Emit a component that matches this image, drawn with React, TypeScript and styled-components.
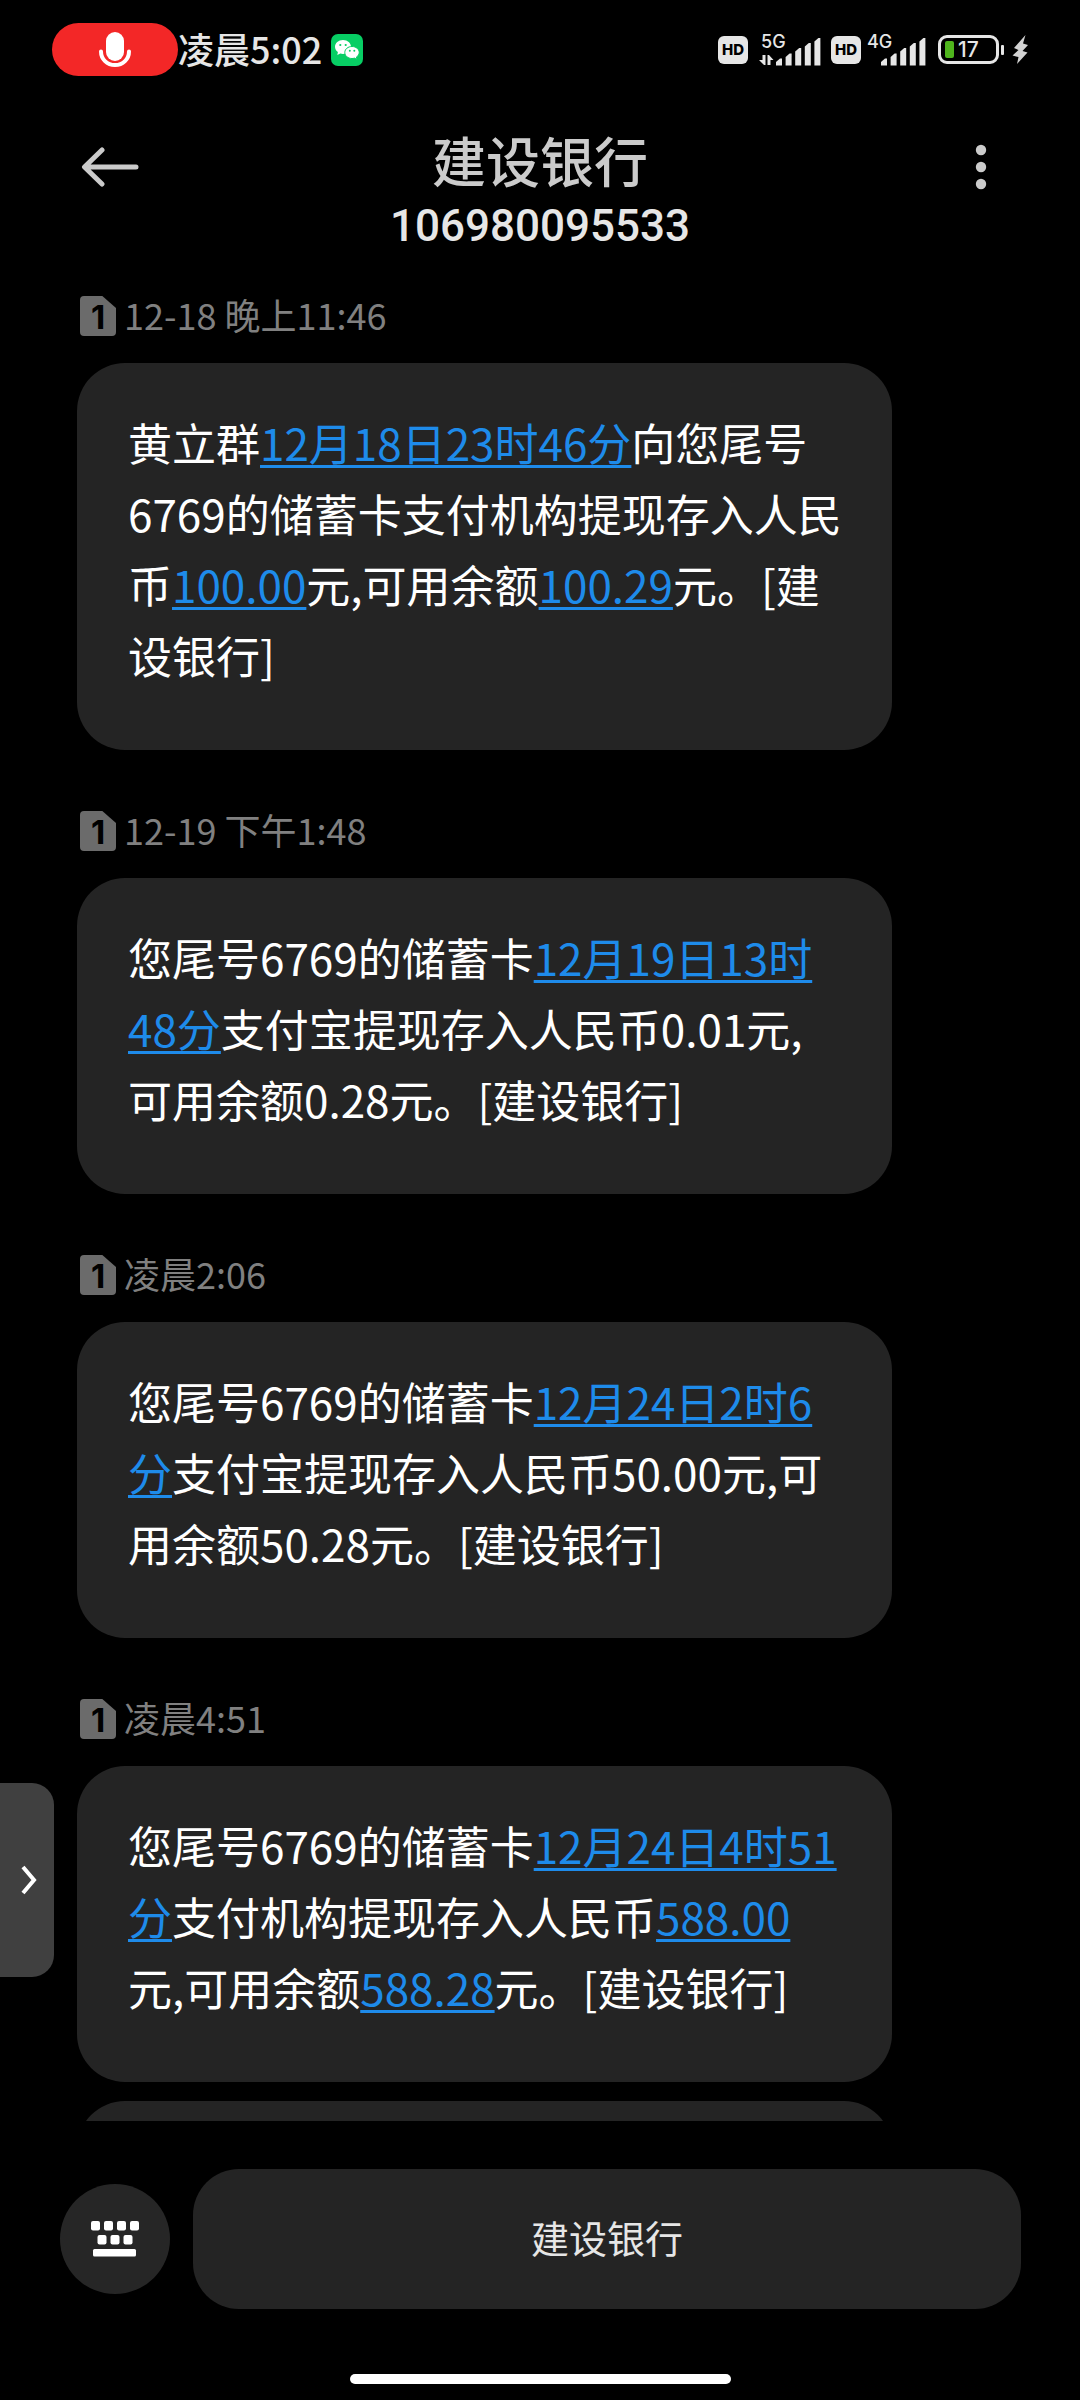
import React from "react";
import styled, { createGlobalStyle } from "styled-components";

const cjk = `"Noto Sans CJK SC", "Noto Sans", sans-serif`;

const GlobalStyle = createGlobalStyle`
  * { box-sizing: border-box; }
  body { margin: 0; background: #000; font-family: ${cjk}; }
  button { border: 0; padding: 0; background: none; color: inherit; font: inherit; cursor: pointer; }
`;

const Screen = styled.div`
  position: relative;
  display: flex;
  flex-direction: column;
  height: 100vh;
  overflow: hidden;
  background: #000;
  color: #fff;
`;

const StatusBar = styled.div`
  display: flex;
  flex: none;
  align-items: center;
  justify-content: space-between;
  height: 99px;
  padding: 0 52px;
  color: #e6e6e6;
`;

const StatusGroup = styled.div<{ $gap?: number }>`
  display: flex;
  align-items: center;
  gap: ${(p) => p.$gap ?? 0}px;
`;

const RecordingPill = styled.div`
  display: grid;
  place-items: center;
  width: 126px;
  height: 53px;
  border-radius: 27px;
  background: #f32727;
`;

const Clock = styled.time`
  margin-right: 9px;
  padding-bottom: 4px;
  font-size: 36px;
  font-weight: 500;
  line-height: 48px;
`;

const HdBadge = styled.span`
  display: grid;
  place-items: center;
  width: 30px;
  height: 28px;
  border-radius: 6px;
  background: #e6e6e6;
  color: #000;
  font: 800 15px/28px Inter, sans-serif;
`;

const Signal = styled.span<{ $wide?: boolean }>`
  display: grid;
  grid-template-areas: "cell";
  width: ${(p) => (p.$wide ? 62 : 58)}px;
  height: 32px;
  & > * { grid-area: cell; }
`;

const Network = styled.span<{ $wide?: boolean }>`
  padding-left: ${(p) => (p.$wide ? 2 : 0)}px;
  font: 500 18px/16px Inter, sans-serif;
`;

const Battery = styled.span`
  display: flex;
  align-items: center;
  gap: 4px;
  width: 61px;
  height: 29px;
  padding-left: 4px;
  border: 3px solid #e6e6e6;
  border-radius: 9px;
  font: 500 21px/23px Inter, sans-serif;
`;

const Charge = styled.span`
  width: 9px;
  height: 17px;
  border-radius: 2px;
  background: #4fb51d;
`;

const BatteryCap = styled.span`
  width: 3px;
  height: 10px;
  margin: 0 8px 0 2px;
  border-radius: 1px;
  background: #e6e6e6;
`;

const Header = styled.header`
  display: grid;
  flex: none;
  grid-template-columns: 80px 1fr 80px;
  padding: 28px 59px 0;
`;

const IconButton = styled.button<{ $start?: boolean }>`
  display: grid;
  align-items: center;
  justify-items: ${(p) => (p.$start ? "end" : "center")};
  width: 80px;
  height: 80px;
`;

const Titles = styled.div`
  text-align: center;
`;

const Title = styled.h1`
  margin: 0;
  color: #cbcbcb;
  font-size: 54px;
  font-weight: 500;
  line-height: 65px;
`;

const Sender = styled.p`
  margin: 0;
  color: #e6e6e6;
  font: 500 44px/68px Roboto, sans-serif;
`;

const Thread = styled.main`
  flex: 1;
  min-height: 0;
  overflow: hidden;
  padding: 36px 77px 0;
`;

const Message = styled.article`
  max-width: 815px;
  margin-bottom: 61px;
`;

const Stamp = styled.div`
  display: flex;
  gap: 8px;
  height: 40px;
  margin: 0 0 27px 3px;
  color: #808080;
  font-size: 36px;
  line-height: 36px;
`;

const Sim = styled.span`
  width: 36px;
  height: 40px;
  border-radius: 4px;
  background: #6b6b6b;
  clip-path: polygon(0 0, 62% 0, 100% 30%, 100% 100%, 0 100%);
  color: #000;
  font: 700 33px/42px Inter, sans-serif;
  text-align: center;
`;

const Bubble = styled.p`
  margin: 0;
  padding: 44px 46px 59px 51px;
  border-radius: 48px;
  background: #242424;
  font-size: 44px;
  line-height: 71px;
`;

const NextBubble = styled.div`
  max-width: 815px;
  height: 174px;
  margin-top: -42px;
  border-radius: 48px;
  background: #242424;
`;

const Link = styled.a`
  color: #1e8bea;
  text-decoration: underline;
  text-decoration-thickness: 3px;
  text-decoration-skip-ink: none;
  text-underline-offset: 4px;
`;

const Footer = styled.footer`
  display: flex;
  flex: none;
  align-items: center;
  gap: 23px;
  padding: 48px 59px 65px 60px;
`;

const KeyboardButton = styled.button`
  display: grid;
  flex: none;
  place-items: center;
  width: 110px;
  height: 110px;
  border-radius: 50%;
  background: #262626;
`;

const MenuButton = styled.button`
  flex: 1;
  height: 140px;
  padding-bottom: 5px;
  border-radius: 46px;
  background: #242424;
  color: #e6e6e6;
  font-size: 38px;
`;

const HomeBar = styled.div`
  flex: none;
  align-self: center;
  width: 381px;
  height: 10px;
  margin-bottom: 16px;
  border-radius: 5px;
  background: #fff;
`;

const SideHandle = styled.button`
  position: absolute;
  top: 1783px;
  left: 0;
  display: grid;
  place-items: center;
  width: 54px;
  height: 194px;
  padding-left: 4px;
  border-radius: 0 22px 22px 0;
  background: #404040;
`;

type Part = string | { link: string };

const messages: { time: string; lines: Part[][] }[] = [
  {
    time: "12-18 晚上11:46",
    lines: [
      ["黄立群", { link: "12月18日23时46分" }, "向您尾号"],
      ["6769的储蓄卡支付机构提现存入人民"],
      ["币", { link: "100.00" }, "元,可用余额", { link: "100.29" }, "元。[建"],
      ["设银行]"],
    ],
  },
  {
    time: "12-19 下午1:48",
    lines: [
      ["您尾号6769的储蓄卡", { link: "12月19日13时" }],
      [{ link: "48分" }, "支付宝提现存入人民币0.01元,"],
      ["可用余额0.28元。[建设银行]"],
    ],
  },
  {
    time: "凌晨2:06",
    lines: [
      ["您尾号6769的储蓄卡", { link: "12月24日2时6" }],
      [{ link: "分" }, "支付宝提现存入人民币50.00元,可"],
      ["用余额50.28元。[建设银行]"],
    ],
  },
  {
    time: "凌晨4:51",
    lines: [
      ["您尾号6769的储蓄卡", { link: "12月24日4时51" }],
      [{ link: "分" }, "支付机构提现存入人民币", { link: "588.00" }],
      ["元,可用余额", { link: "588.28" }, "元。[建设银行]"],
    ],
  },
];

const Mic = () => (
  <svg width="32" height="36" viewBox="0 0 32 36" fill="none">
    <rect x="7" y="0" width="18" height="29" rx="9" fill="#fff" />
    <path d="M2 19.500C2 27 8 33 16 33s14-6 14-13.500" stroke="#fff" strokeWidth="4" strokeLinecap="round" />
  </svg>
);

const WeChat = () => (
  <svg width="32" height="32" viewBox="0 0 32 32">
    <rect width="32" height="32" rx="7" fill="#07ce64" />
    <path d="M12 6C7.400 6 4 9 4 12.800c0 2.200 1.100 4 2.900 5.300L6.300 21l3-1.500c.9.200 1.800.4 2.700.4 4.600 0 8-3.200 8-7S16.600 6 12 6Z" fill="#fff" />
    <path d="M21 12.500c-4 0-7.200 2.600-7.200 6s3.200 6 7.200 6c.8 0 1.700-.1 2.400-.4l2.600 1.400-.6-2.400c1.700-1.100 2.800-2.700 2.800-4.600 0-3.400-3.200-6-7.200-6Z" fill="#fff" stroke="#07ce64" strokeWidth="1" />
    <g fill="#07ce64">
      <circle cx="9.300" cy="11" r="1.100" />
      <circle cx="14.700" cy="11" r="1.100" />
      <circle cx="18.800" cy="16.800" r="1" />
      <circle cx="23.300" cy="16.800" r="1" />
    </g>
  </svg>
);

const Bars = ({ offset, arrows }: { offset: number; arrows?: boolean }) => (
  <svg width={offset + 45} height="32" viewBox={`0 0 ${offset + 45} 32`} fill="#e6e6e6">
    {[24.500, 19.500, 14, 9, 4].map((top, i) => {
      const x = offset + i * 9.600;
      return <path key={top} d={`M${x} 31.500V${top + 3.500}L${x + 4} ${top}H${x + 6}V31.500Z`} />;
    })}
    {arrows && <path d="M3.500 21H6.500v10H5L0 26h3.500ZM8.500 21H10l4.500 5H11.500V31H8.500Z" />}
  </svg>
);

const Bolt = () => (
  <svg width="16" height="29" viewBox="0 0 16 29" fill="#d2d2d2">
    <path d="M13.500 0 2 13l4.500 2L.5 20.500l6 1.500L5 29 15.500 17.500 10.500 16l5.500-6-5-1.500Z" />
  </svg>
);

const BackArrow = () => (
  <svg width="58" height="40" viewBox="0 0 58 40" fill="none" stroke="#cbcbcb" strokeWidth="5" strokeLinecap="round" strokeLinejoin="round">
    <path d="M21 3 3.500 20 21 37M4 20h51" />
  </svg>
);

const Dots = () => (
  <svg width="12" height="46" viewBox="0 0 12 46" fill="#cbcbcb">
    <circle cx="6" cy="6" r="5.200" />
    <circle cx="6" cy="23" r="5.200" />
    <circle cx="6" cy="40" r="5.200" />
  </svg>
);

const Keyboard = () => (
  <svg width="48" height="36" viewBox="0 0 48 36" fill="#fff">
    {[0, 13, 26, 39].map((x) => <rect key={x} x={x} y="0" width="9" height="9.500" rx="2" />)}
    {[6.500, 19.500, 32.500].map((x) => <rect key={x} x={x} y="14" width="9" height="9.500" rx="2" />)}
    <rect x="2" y="28" width="43" height="7.500" rx="1.500" />
  </svg>
);

const Chevron = () => (
  <svg width="18" height="30" viewBox="0 0 18 30" fill="none" stroke="#fff" strokeWidth="4">
    <path d="M3 2l11 13L3 28" />
  </svg>
);

export default function App() {
  return (
    <Screen>
      <GlobalStyle />
      <StatusBar>
        <StatusGroup>
          <RecordingPill><Mic /></RecordingPill>
          <Clock>凌晨5:02</Clock>
          <WeChat />
        </StatusGroup>
        <StatusGroup $gap={13}>
          <StatusGroup $gap={10}>
            <StatusGroup $gap={11}>
              <HdBadge>HD</HdBadge>
              <Signal $wide>
                <Network $wide>5G</Network>
                <Bars offset={17} arrows />
              </Signal>
            </StatusGroup>
            <StatusGroup $gap={6}>
              <HdBadge>HD</HdBadge>
              <Signal>
                <Network>4G</Network>
                <Bars offset={14} />
              </Signal>
            </StatusGroup>
          </StatusGroup>
          <StatusGroup>
            <Battery><Charge />17</Battery>
            <BatteryCap />
            <Bolt />
          </StatusGroup>
        </StatusGroup>
      </StatusBar>

      <Header>
        <IconButton $start aria-label="返回"><BackArrow /></IconButton>
        <Titles>
          <Title>建设银行</Title>
          <Sender>106980095533</Sender>
        </Titles>
        <IconButton aria-label="更多"><Dots /></IconButton>
      </Header>

      <Thread>
        {messages.map((m) => (
          <Message key={m.time}>
            <Stamp><Sim>1</Sim>{m.time}</Stamp>
            <Bubble>
              {m.lines.map((line, i) => (
                <React.Fragment key={i}>
                  {i > 0 && <br />}
                  {line.map((part, j) =>
                    typeof part === "string" ? part : <Link key={j} href="#">{part.link}</Link>
                  )}
                </React.Fragment>
              ))}
            </Bubble>
          </Message>
        ))}
        <NextBubble />
      </Thread>

      <Footer>
        <KeyboardButton aria-label="键盘"><Keyboard /></KeyboardButton>
        <MenuButton>建设银行</MenuButton>
      </Footer>
      <HomeBar />
      <SideHandle aria-label="展开侧边栏"><Chevron /></SideHandle>
    </Screen>
  );
}
